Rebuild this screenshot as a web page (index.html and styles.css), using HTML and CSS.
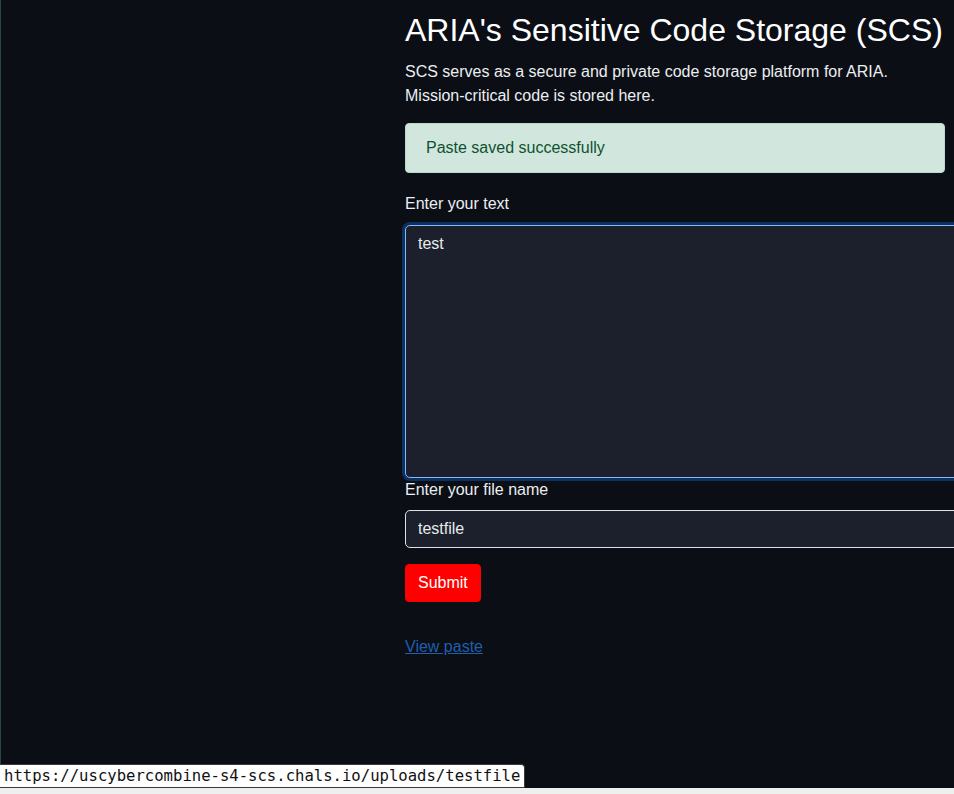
FILE: index.html
```html
<!DOCTYPE html>
<html lang="en">
<head>
<meta charset="utf-8">
<title>ARIA's Sensitive Code Storage (SCS)</title>
<link rel="stylesheet" href="styles.css">
</head>
<body>
<div class="page">
  <main class="container">
    <h1 class="title">ARIA's Sensitive Code Storage (SCS)</h1>
    <p class="lead">SCS serves as a secure and private code storage platform for ARIA. Mission-critical code is stored here.</p>
    <div class="alert">Paste saved successfully</div>
    <form class="paste-form">
      <label class="label" for="text">Enter your text</label>
      <textarea id="text" class="control textarea">test</textarea>
      <label class="label label-tight" for="name">Enter your file name</label>
      <input id="name" class="control input" type="text" value="testfile">
      <button class="btn-submit" type="button">Submit</button>
    </form>
    <a class="view-link" href="#">View paste</a>
  </main>
</div>
<div class="status-bubble">https://uscybercombine-s4-scs.chals.io/uploads/testfile</div>
<div class="bottom-strip"></div>
</body>
</html>
```

FILE: styles.css
```css
* { box-sizing: border-box; }

html, body {
  margin: 0;
  padding: 0;
  height: 100%;
}

body {
  background: #0b0e15;
  color: #e8eaed;
  font-family: "Liberation Sans", Arial, sans-serif;
  font-size: 16px;
  line-height: 1.5;
  overflow: hidden;
  border-left: 1px solid #24483f;
}

.page {
  padding-left: 404px;
  padding-top: 11px;
}

.container {
  width: 540px;
}

.title {
  margin: 0 0 11px;
  font-size: 32px;
  font-weight: 400;
  line-height: 1.2;
  color: #ffffff;
  white-space: nowrap;
}

.lead {
  margin: 0 0 15px;
  color: #eceef1;
}

.alert {
  background: #d1e7dd;
  border: 1px solid #badbcc;
  border-radius: 4px;
  color: #0f5132;
  padding: 12px 20px;
  margin-bottom: 19px;
}

.paste-form {
  display: flex;
  flex-direction: column;
  align-items: flex-start;
}

.label {
  display: block;
  margin-bottom: 9px;
  color: #eceef1;
}

.label-tight {
  margin-bottom: 8px;
}

.control {
  display: block;
  width: 700px;
  font-family: "Liberation Sans", Arial, sans-serif;
  font-size: 16px;
  line-height: 1.5;
  color: #e8eaed;
  background: #1b202c;
  border: 1px solid #dee2e6;
  border-radius: 5px;
  padding: 6px 12px;
}

.textarea {
  height: 253px;
  resize: none;
  border-color: #86b7fe;
  box-shadow: 0 0 0 3px #0b3160;
  outline: none;
  margin-bottom: 0;
}

.input {
  height: 38px;
  margin-bottom: 16px;
}

.btn-submit {
  font-family: "Liberation Sans", Arial, sans-serif;
  font-size: 16px;
  line-height: 1.5;
  color: #ffffff;
  background: #ff0000;
  border: 1px solid #ff0000;
  border-radius: 4px;
  padding: 6px 12px;
  height: 38px;
}

.view-link {
  display: inline-block;
  margin-top: 33px;
  color: #1f5fae;
  text-decoration: underline;
}

.status-bubble {
  position: fixed;
  left: 0;
  bottom: 6px;
  height: 24px;
  padding: 0 4px 0 4px;
  background: #ffffff;
  color: #111111;
  border: 1px solid #3a3a3a;
  border-left: none;
  border-top-right-radius: 4px;
  font-family: "DejaVu Sans Mono", monospace;
  font-size: 15.6px;
  line-height: 22px;
  white-space: nowrap;
}

.bottom-strip {
  position: fixed;
  left: 0;
  right: 0;
  bottom: 0;
  height: 6px;
  background: #efefef;
}
```
